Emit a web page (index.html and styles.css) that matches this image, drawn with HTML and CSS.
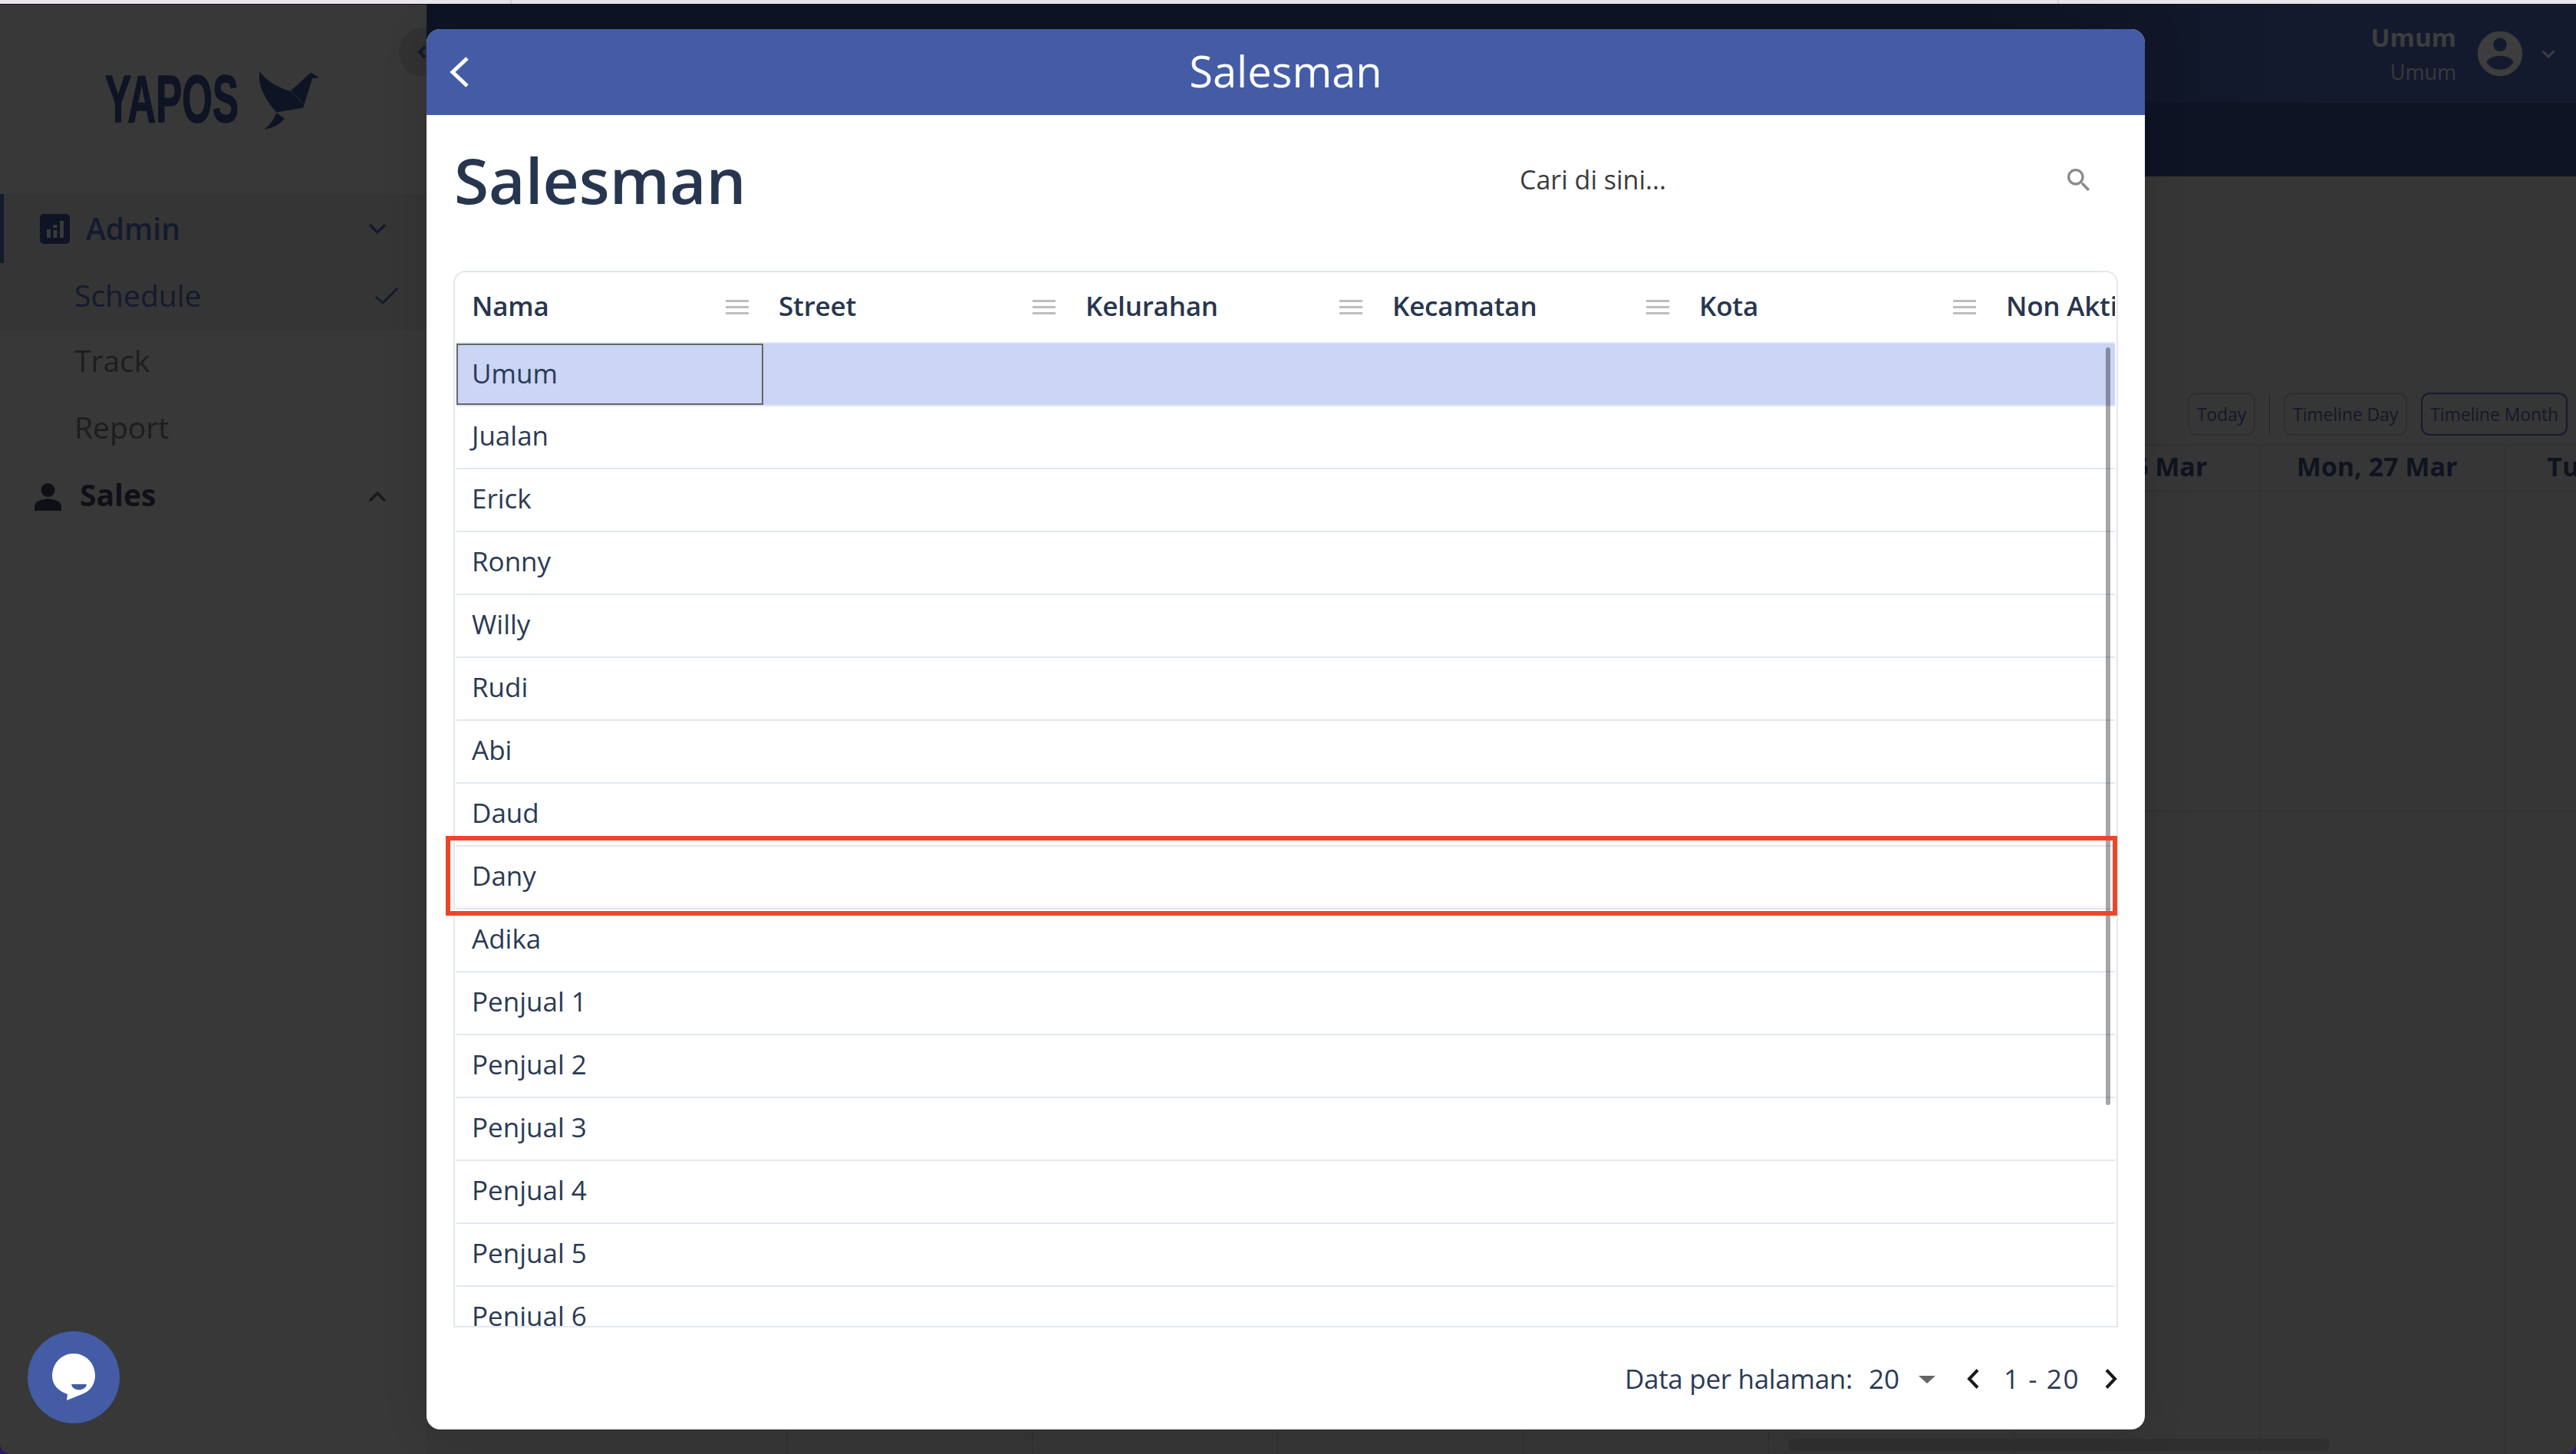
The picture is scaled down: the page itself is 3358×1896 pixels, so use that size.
FILE: index.html
```html
<!DOCTYPE html>
<html lang="id">
<head>
<meta charset="utf-8">
<title>Salesman</title>
<link rel="stylesheet" href="styles.css">
</head>
<body>
<div class="tabs"><span class="tab tab-a"></span><span class="tab tab-b"></span><span class="tab tab-c"></span></div>
<div class="app">
  <aside class="sidebar">
    <div class="logo">
      <span class="logo-text">YAPOS</span>
      <svg class="bird" viewBox="650 35 240 233" width="80" height="78"><path fill="#0e1424" d="M655 38Q640 105 720 198L825 180L860 65L888 62L855 42L775 115Q690 90 655 38Z"/><path fill="#0e1424" d="M720 200L752 222Q725 258 672 265Q705 240 720 200Z"/><path fill="none" stroke="#3a3f4c" stroke-width="2" d="M775 113L825 165"/></svg>
    </div>
    <div class="nav-group">
      <div class="nav-item nav-parent">
        <svg class="nav-icon" viewBox="0 0 39 39" width="39" height="39"><rect width="39" height="39" rx="5" fill="#0e1424"/><rect x="9" y="20" width="5" height="11" fill="#3a3a3a"/><rect x="17.500" y="14" width="5" height="4" fill="#3a3a3a"/><rect x="17.500" y="21" width="5" height="10" fill="#3a3a3a"/><rect x="26" y="9" width="5" height="22" fill="#3a3a3a"/></svg>
        <span class="nav-label">Admin</span>
        <svg class="chev" viewBox="0 0 24 14" width="24" height="14"><path d="M2 2L12 12L22 2" fill="none" stroke="#141a2e" stroke-width="3.500"/></svg>
      </div>
      <div class="nav-item nav-sub nav-current">
        <span class="nav-label">Schedule</span>
        <svg class="check" viewBox="0 0 30 22" width="30" height="22"><path d="M1 12L10 20L29 1" fill="none" stroke="#141a2e" stroke-width="3"/></svg>
      </div>
    </div>
    <div class="nav-item nav-sub nav-plain"><span class="nav-label">Track</span></div>
    <div class="nav-item nav-sub nav-plain"><span class="nav-label">Report</span></div>
    <div class="nav-item nav-sales">
      <svg class="sales-icon" viewBox="0 0 35 36" width="35" height="36"><circle cx="17.500" cy="9" r="9" fill="#0f1015"/><path d="M0 36V30C0 24 9 20.500 17.500 20.500S35 24 35 30V36Z" fill="#0f1015"/></svg>
      <span class="nav-label">Sales</span>
      <svg class="chev" viewBox="0 0 24 14" width="24" height="14"><path d="M2 12L12 2L22 12" fill="none" stroke="#1a1a1a" stroke-width="3.500"/></svg>
    </div>
  </aside>
  <div class="collapse"><svg viewBox="0 0 12 18" width="12" height="18"><path d="M10 2L3 9L10 16" fill="none" stroke="#141a2e" stroke-width="4"/></svg></div>
  <main class="main">
    <header class="topbar">
      <div class="user"><strong class="user-name">Umum</strong><span class="user-role">Umum</span></div>
      <svg class="avatar" viewBox="0 0 24 24" width="70" height="70"><path fill="#3d3d3d" d="M12 2C6.480 2 2 6.480 2 12s4.480 10 10 10 10-4.480 10-10S17.520 2 12 2zm0 3c1.660 0 3 1.340 3 3s-1.340 3-3 3-3-1.340-3-3 1.340-3 3-3zm0 14.200c-2.500 0-4.710-1.280-6-3.220.030-1.990 4-3.080 6-3.080 1.990 0 5.970 1.090 6 3.080-1.290 1.940-3.500 3.220-6 3.220z"/></svg>
      <svg class="user-chev" viewBox="0 0 18 11" width="18" height="11"><path d="M1.500 1.500L9 9L16.500 1.500" fill="none" stroke="#3d3d3d" stroke-width="3"/></svg>
    </header>
    <div class="band"></div>
    <div class="toolbar">
      <span class="cal-btn">Today</span>
      <span class="cal-divider"></span>
      <span class="cal-btn">Timeline Day</span>
      <span class="cal-btn cal-btn-active">Timeline Month</span>
    </div>
    <div class="calendar">
      <div class="cal-head">
        <div class="cal-col">Mon, 20 Mar</div><div class="cal-col">Tue, 21 Mar</div><div class="cal-col">Wed, 22 Mar</div><div class="cal-col">Thu, 23 Mar</div><div class="cal-col">Fri, 24 Mar</div><div class="cal-col">Sat, 25 Mar</div><div class="cal-col">Sun, 26 Mar</div><div class="cal-col">Mon, 27 Mar</div><div class="cal-col">Tue, 28 Mar</div>
      </div>
      <div class="cal-row"><div class="cal-cell"></div><div class="cal-cell"></div><div class="cal-cell"></div><div class="cal-cell"></div><div class="cal-cell"></div><div class="cal-cell"></div><div class="cal-cell"></div><div class="cal-cell"></div><div class="cal-cell"></div></div>
      <div class="cal-row cal-row-last"><div class="cal-cell"></div><div class="cal-cell"></div><div class="cal-cell"></div><div class="cal-cell"></div><div class="cal-cell"></div><div class="cal-cell"></div><div class="cal-cell"></div><div class="cal-cell"></div><div class="cal-cell"></div></div>
    </div>
    <div class="h-scroll"></div>
  </main>
</div>

<div class="chat">
  <svg viewBox="0 0 56 62" width="56" height="62"><path fill="#fff" d="M28 0C44 0 56 13 56 29C56 41 48 50 39 53L19 61L20 53C8 49 0 41 0 29C0 13 12 0 28 0Z"/><path fill="#445ca6" d="M25 40H45Q44 47 35 47.500Q26 47 25 40Z"/></svg>
</div>

<section class="modal">
  <div class="modal-bar">
    <svg class="back" viewBox="0 0 26 40" width="26" height="40"><path d="M23 2L4 20L23 38" fill="none" stroke="#fff" stroke-width="5"/></svg>
    <span class="modal-bar-title">Salesman</span>
  </div>
  <div class="modal-head">
    <h1 class="page-title">Salesman</h1>
    <div class="search">
      <span class="search-text">Cari di sini...</span>
      <svg class="search-icon" viewBox="0 0 24 24" width="40" height="40"><path fill="#8a8a8a" d="M15.500 14h-.79l-.28-.27C15.410 12.590 16 11.110 16 9.500 16 5.910 13.090 3 9.500 3S3 5.910 3 9.500 5.910 16 9.500 16c1.610 0 3.090-.59 4.230-1.570l.27.28v.79l5 4.990L20.490 19l-4.990-5zm-6 0C7.010 14 5 11.990 5 9.500S7.010 5 9.500 5 14 7.010 14 9.500 11.990 14 9.500 14z"/></svg>
    </div>
  </div>
  <div class="grid-card">
    <div class="grid-head">
      <div class="hcell"><span>Nama</span><i class="menu"></i></div>
      <div class="hcell"><span>Street</span><i class="menu"></i></div>
      <div class="hcell"><span>Kelurahan</span><i class="menu"></i></div>
      <div class="hcell"><span>Kecamatan</span><i class="menu"></i></div>
      <div class="hcell"><span>Kota</span><i class="menu"></i></div>
      <div class="hcell"><span>Non Aktif</span><i class="menu"></i></div>
    </div>
    <div class="grid-body">
      <div class="row row-selected"><div class="cell cell-focus">Umum</div></div>
      <div class="row"><div class="cell">Jualan</div></div>
      <div class="row"><div class="cell">Erick</div></div>
      <div class="row"><div class="cell">Ronny</div></div>
      <div class="row"><div class="cell">Willy</div></div>
      <div class="row"><div class="cell">Rudi</div></div>
      <div class="row"><div class="cell">Abi</div></div>
      <div class="row"><div class="cell">Daud</div></div>
      <div class="row"><div class="cell">Dany</div></div>
      <div class="row"><div class="cell">Adika</div></div>
      <div class="row"><div class="cell">Penjual 1</div></div>
      <div class="row"><div class="cell">Penjual 2</div></div>
      <div class="row"><div class="cell">Penjual 3</div></div>
      <div class="row"><div class="cell">Penjual 4</div></div>
      <div class="row"><div class="cell">Penjual 5</div></div>
      <div class="row"><div class="cell">Penjual 6</div></div>
      <div class="v-scroll"></div>
    </div>
  </div>
  <div class="pager">
    <span class="pager-label">Data per halaman:</span>
    <span class="pager-size">20</span>
    <i class="pager-caret"></i>
    <svg class="pager-prev" viewBox="0 0 16 26" width="16" height="26"><path d="M14 1.500L3 13L14 24.500" fill="none" stroke="#1a1a1a" stroke-width="4"/></svg>
    <span class="pager-range">1 - 20</span>
    <svg class="pager-next" viewBox="0 0 16 26" width="16" height="26"><path d="M2 1.500L13 13L2 24.500" fill="none" stroke="#1a1a1a" stroke-width="4"/></svg>
  </div>
</section>
<div class="annotation"></div>
</body>
</html>
```

FILE: styles.css
```css
* { box-sizing: border-box; }
html, body { margin: 0; padding: 0; }
body {
  width: 3358px;
  height: 1896px;
  overflow: hidden;
  position: relative;
  background: #2a1670;
  font-family: "Open Sans", "Noto Sans", sans-serif;
  color: #2b3a55;
}

/* browser strip */
.tabs { display: flex; height: 6px; background: #111; padding-bottom: 1px; }
.tab { display: block; height: 5px; background: #ebe6eb; }
.tab-a { width: 667px; border-right: 2px solid #d8d4d8; }
.tab-b { width: 2017px; border-right: 2px solid #d8d4d8; }
.tab-c { flex: 1; }

.app {
  display: flex;
  height: 1890px;
  background: #363636;
  border-radius: 0 0 14px 14px;
  overflow: hidden;
}

/* sidebar */
.sidebar { width: 556px; flex: none; background: #383838; }
.logo { height: 247px; display: flex; align-items: flex-start; padding: 83px 0 0 137px; }
.logo-text {
  display: block;
  width: 170px;
  font-family: "Liberation Sans Narrow", "Liberation Sans", sans-serif;
  font-weight: 700;
  font-size: 88px;
  line-height: 80px;
  color: #0e1424;
  -webkit-text-stroke: 1.500px #0e1424;
  transform: scaleX(.58);
  transform-origin: 0 0;
  white-space: nowrap;
}
.bird { margin: 3px 0 0 30px; flex: none; }
.nav-group { background: #353535; }
.nav-item { display: flex; align-items: center; position: relative; }
.nav-parent { height: 90px; padding-left: 52px; }
.nav-parent::before { content: ""; position: absolute; left: 0; top: 0; bottom: 0; width: 5px; background: #141a2e; }
.nav-parent .nav-label { margin-left: 21px; font-weight: 600; color: #141a2e; }
.nav-label { font-size: 39px; line-height: 50px; }
.chev { position: absolute; left: 480px; top: 50%; margin-top: -7px; }
.nav-sub { height: 87px; padding: 0 0 4px 97px; }
.nav-current { color: #141a2e; }
.nav-plain { color: #1d1d1f; padding-bottom: 7px; }
.check { position: absolute; left: 489px; top: 32px; }
.nav-sales { height: 88px; padding: 0 0 7px 45px; color: #0f1015; }
.nav-sales .sales-icon { margin-top: 7px; }
.nav-sales .nav-label { margin-left: 24px; font-weight: 700; }

.collapse {
  position: absolute;
  left: 520px; top: 36px;
  width: 64px; height: 64px;
  border-radius: 50%;
  background: #323232;
  display: flex; align-items: center; padding-left: 24px;
}

/* main */
.main { flex: 1; min-width: 0; display: flex; flex-direction: column; position: relative; overflow: hidden; }
.topbar {
  height: 128px;
  flex: none;
  display: flex; align-items: center; justify-content: flex-end;
  padding: 0 27px 0 0;
  background: linear-gradient(90deg, #0e1424 0, #0e1424 72%, #141a2e 88%);
}
.user { display: flex; flex-direction: column; align-items: flex-end; margin-right: 22px; }
.user-name { font-size: 33px; line-height: 42px; font-weight: 700; color: #3d3d3d; }
.user-role { font-size: 27px; line-height: 38px; color: #3a3a3a; margin-top: 5px; }
.user-chev { margin-left: 19px; }
.band { height: 96px; flex: none; background: #0e1424; }
.toolbar { display: flex; justify-content: flex-end; align-items: center; height: 56px; margin-top: 282px; padding-right: 11px; flex: none; }
.cal-btn {
  height: 56px; padding: 0 10px;
  display: flex; align-items: center;
  border: 2px solid #2f2f2f; border-radius: 11px;
  font-size: 23px; letter-spacing: -.1px; color: #14182a;
  margin-left: 18px;
}
.cal-btn-active { border-color: #141a2e; }
.cal-divider { width: 1px; height: 52px; background: #222; margin-left: 18px; }
.calendar { margin-top: 12px; flex: 1; display: flex; flex-direction: column; min-height: 0; }
.cal-head { display: flex; height: 61px; flex: none; border-top: 1px solid #2f2f2f; border-bottom: 1px solid #2f2f2f; padding-left: 150px; }
.cal-col {
  width: 320px; flex: none;
  border-right: 1px solid #2f2f2f;
  display: flex; align-items: center; justify-content: center;
  padding: 0 14px 5px 0;
  font-size: 34px; font-weight: 700; color: #0f1320;
  white-space: nowrap;
}
.cal-row { display: flex; height: 417px; flex: none; border-bottom: 1px solid #2f2f2f; padding-left: 150px; }
.cal-row-last { height: 900px; border-bottom: 0; }
.cal-cell { width: 320px; flex: none; border-right: 1px solid #2f2f2f; }
.h-scroll { position: absolute; left: 1775px; top: 1870px; width: 706px; height: 16px; border-radius: 8px; background: #2f2f2f; }

/* chat launcher */
.chat {
  position: absolute;
  left: 36px; top: 1736px;
  width: 120px; height: 120px;
  border-radius: 50%;
  background: #445ca6;
  display: flex; align-items: center; justify-content: center;
}

/* modal */
.modal {
  position: absolute;
  left: 556px; top: 38px;
  width: 2240px; height: 1826px;
  background: #fff;
  border-radius: 18px;
  overflow: hidden;
  box-shadow: 0 0 60px rgba(0, 0, 0, .12);
  display: flex; flex-direction: column;
}
.modal-bar { height: 112px; flex: none; background: #445ca6; display: flex; align-items: center; justify-content: center; position: relative; padding-bottom: 5px; }
.back { position: absolute; left: 30px; top: 36px; }
.modal-bar-title { font-size: 56px; font-weight: 500; color: #fff; }
.modal-head { height: 203px; flex: none; display: flex; justify-content: space-between; align-items: center; padding: 0 66px 36px 36px; }
.page-title { margin: 0; font-size: 82px; line-height: 100px; font-weight: 600; color: #27364f; }
.search { width: 765px; display: flex; justify-content: space-between; align-items: center; padding-left: 16px; }
.search-text { font-size: 34px; color: #3c3c3c; }
.search-icon { margin-top: 3px; }

.grid-card {
  width: 2170px; height: 1378px; flex: none;
  margin-left: 35px;
  border: 2px solid #e2e8f0;
  border-radius: 16px 16px 0 0;
  padding: 0 2px;
  overflow: hidden;
  display: flex; flex-direction: column;
}
.grid-head { display: flex; height: 93px; flex: none; border-bottom: 2px solid #e2e8f0; overflow: hidden; }
.hcell { width: 400px; flex: none; display: flex; justify-content: space-between; align-items: center; padding: 0 19px 0 20px; font-size: 35px; letter-spacing: -.2px; font-weight: 600; color: #27364f; white-space: nowrap; }
.hcell span { margin-bottom: 5px; }
.menu { display: block; width: 30px; height: 19px; border-top: 3px solid #bdbdbd; border-bottom: 3px solid #bdbdbd; position: relative; }
.menu::after { content: ""; position: absolute; left: 0; right: 0; top: 5px; height: 3px; background: #bdbdbd; }
.grid-body { flex: 1; min-height: 0; overflow: hidden; position: relative; }
.row { height: 82px; border-bottom: 2px solid #e2e8f0; display: flex; }
.row-selected { background: #cbd5f6; }
.cell { width: 400px; display: flex; align-items: center; padding: 0 0 5px 20px; font-size: 35px; color: #2b3a55; }
.cell-focus { height: 80px; border: 2px solid #666; padding: 0 0 3px 18px; }
.v-scroll { position: absolute; right: 6px; top: 5px; width: 6px; height: 988px; border-radius: 3px; background: rgba(0, 0, 0, .35); }

.pager { flex: 1; display: flex; justify-content: flex-end; align-items: center; padding-right: 36px; font-size: 35px; color: #2b3a55; }
.pager-label { letter-spacing: -.3px; }
.pager-size { margin-left: 21px; }
.pager-caret { display: block; margin-left: 25px; border-left: 11px solid transparent; border-right: 11px solid transparent; border-top: 10px solid #666; margin-top: 2px; }
.pager-prev { margin-left: 41px; }
.pager-range { margin-left: 32px; letter-spacing: 1.600px; }
.pager-next { margin-left: 33px; }

.annotation {
  position: absolute;
  left: 581px; top: 1090px;
  width: 2179px; height: 104px;
  border: 6px solid #ee4527;
}
```
